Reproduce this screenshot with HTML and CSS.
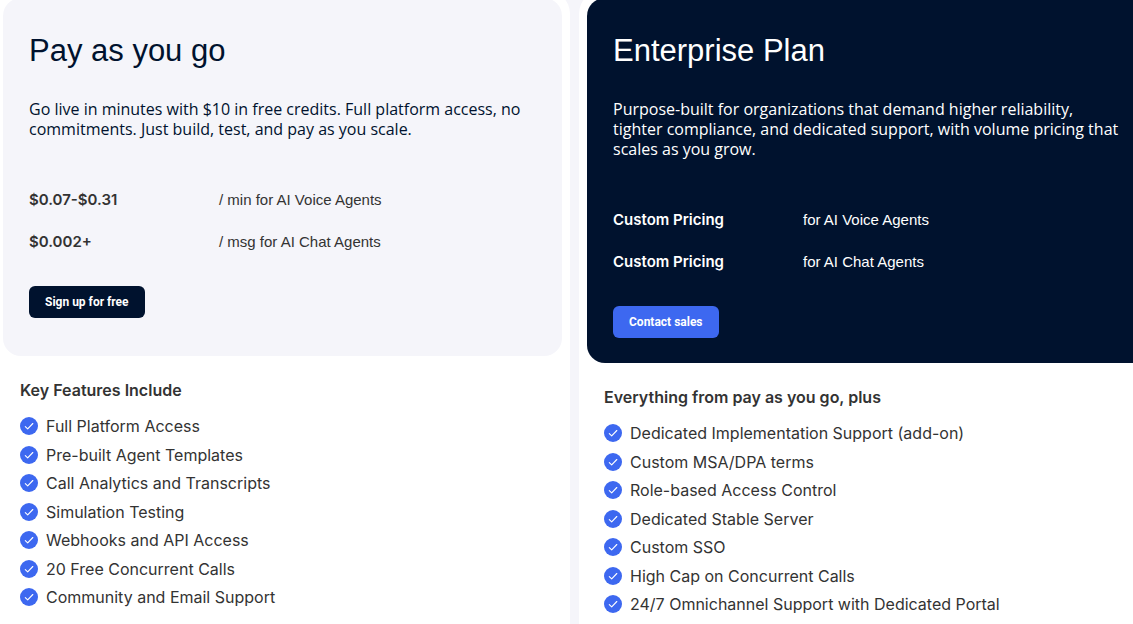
FILE: index.html
```html
<!DOCTYPE html>
<html lang="en">
<head>
<meta charset="utf-8">
<meta name="viewport" content="width=device-width, initial-scale=1.0">
<title>Pricing</title>
<link rel="stylesheet" href="styles.css">
</head>
<body>
<svg width="0" height="0" class="sprite" aria-hidden="true">
  <symbol id="check" viewBox="0 0 18 18">
    <circle cx="9" cy="9" r="9" fill="#3d68f0"/>
    <path d="M5.3 9.6l2.4 2.3 5.1-5.4" fill="none" stroke="#fff" stroke-width="1.1" stroke-linecap="round" stroke-linejoin="round"/>
  </symbol>
</svg>
<main class="plans">
  <section class="plan">
    <div class="panel">
      <h2>Pay as you go</h2>
      <p class="desc">Go live in minutes with $10 in free credits. Full platform access, no commitments. Just build, test, and pay as you scale.</p>
      <table class="prices">
        <tr><th scope="row">$0.07-$0.31</th><td>/ min for AI Voice Agents</td></tr>
        <tr><th scope="row">$0.002+</th><td>/ msg for AI Chat Agents</td></tr>
      </table>
      <button type="button" class="btn">Sign up for free</button>
    </div>
    <div class="features">
      <h3>Key Features Include</h3>
      <ul>
        <li><svg><use href="#check"/></svg>Full Platform Access</li>
        <li><svg><use href="#check"/></svg>Pre-built Agent Templates</li>
        <li><svg><use href="#check"/></svg>Call Analytics and Transcripts</li>
        <li><svg><use href="#check"/></svg>Simulation Testing</li>
        <li><svg><use href="#check"/></svg>Webhooks and API Access</li>
        <li><svg><use href="#check"/></svg>20 Free Concurrent Calls</li>
        <li><svg><use href="#check"/></svg>Community and Email Support</li>
      </ul>
    </div>
  </section>
  <section class="plan">
    <div class="panel dark">
      <h2>Enterprise Plan</h2>
      <p class="desc">Purpose-built for organizations that demand higher reliability, tighter compliance, and dedicated support, with volume pricing that scales as you grow.</p>
      <table class="prices">
        <tr><th scope="row">Custom Pricing</th><td>for AI Voice Agents</td></tr>
        <tr><th scope="row">Custom Pricing</th><td>for AI Chat Agents</td></tr>
      </table>
      <button type="button" class="btn">Contact sales</button>
    </div>
    <div class="features">
      <h3>Everything from pay as you go, plus</h3>
      <ul>
        <li><svg><use href="#check"/></svg>Dedicated Implementation Support (add-on)</li>
        <li><svg><use href="#check"/></svg>Custom MSA/DPA terms</li>
        <li><svg><use href="#check"/></svg>Role-based Access Control</li>
        <li><svg><use href="#check"/></svg>Dedicated Stable Server</li>
        <li><svg><use href="#check"/></svg>Custom SSO</li>
        <li><svg><use href="#check"/></svg>High Cap on Concurrent Calls</li>
        <li><svg><use href="#check"/></svg>24/7 Omnichannel Support with Dedicated Portal</li>
      </ul>
    </div>
  </section>
</main>
</body>
</html>
```
FILE: styles.css
```css
* {
    box-sizing: border-box;
}
body {
    margin: 0;
    background: #f5f5fa;
    color: #333;
    font-family: Inter, "Liberation Sans", sans-serif;
    overflow-x: hidden;
}
.sprite {
    position: absolute;
}
.plans {
    display: grid;
    grid-template-columns: calc(50% - 8px) 1fr;
    gap: 9px;
    margin: -10px -28px 0 -5px;
    min-height: calc(100vh + 10px);
}
.plan {
    background: #fff;
    border-radius: 24px 24px 0 0;
    padding: 8px 8px 0;
}
.panel {
    min-height: 358px;
    padding: 26px 26px 25px;
    border-radius: 18px;
    background: #f5f5fa;
    color: #333;
}
.panel h2 {
    margin: 5px 0 26px;
    color: #00122e;
    font-family: "Liberation Sans", sans-serif;
    font-size: 31px;
    font-weight: 400;
    line-height: 44px;
}
.desc {
    max-width: 508px;
    margin: 0;
    color: #00122e;
    font-family: "Open Sans", sans-serif;
    font-size: 16px;
    line-height: 20px;
}
.prices {
    margin: 40px 0 23px;
    border-collapse: collapse;
    font-size: 15px;
    line-height: 42px;
}
.prices th {
    width: 190px;
    padding: 0;
    text-align: left;
    font-weight: 600;
}
.prices td {
    padding: 0;
    font-family: "Liberation Sans", sans-serif;
}
.btn {
    display: block;
    height: 32px;
    padding: 0 16px;
    border: none;
    border-radius: 6px;
    background: #00122e;
    color: #fff;
    font-family: Roboto, sans-serif;
    font-size: 12px;
    font-weight: 700;
    cursor: pointer;
}
.dark {
    background: #00122e;
    color: #fff;
}
.dark h2, .dark .desc {
    color: #fff;
}
.dark .btn {
    background: #3d68f0;
}
.features {
    padding: 24px 17px 0;
}
.features h3 {
    margin: 0 0 16px;
    font-size: 16px;
    font-weight: 600;
    line-height: 20px;
}
.features ul {
    display: flex;
    flex-direction: column;
    justify-content: space-between;
    height: 191px;
    margin: 0;
    padding: 0;
    list-style: none;
}
.features li {
    display: flex;
    align-items: center;
    gap: 8px;
    font-size: 16px;
    line-height: 20px;
}
.features svg {
    width: 18px;
    height: 18px;
}
```
